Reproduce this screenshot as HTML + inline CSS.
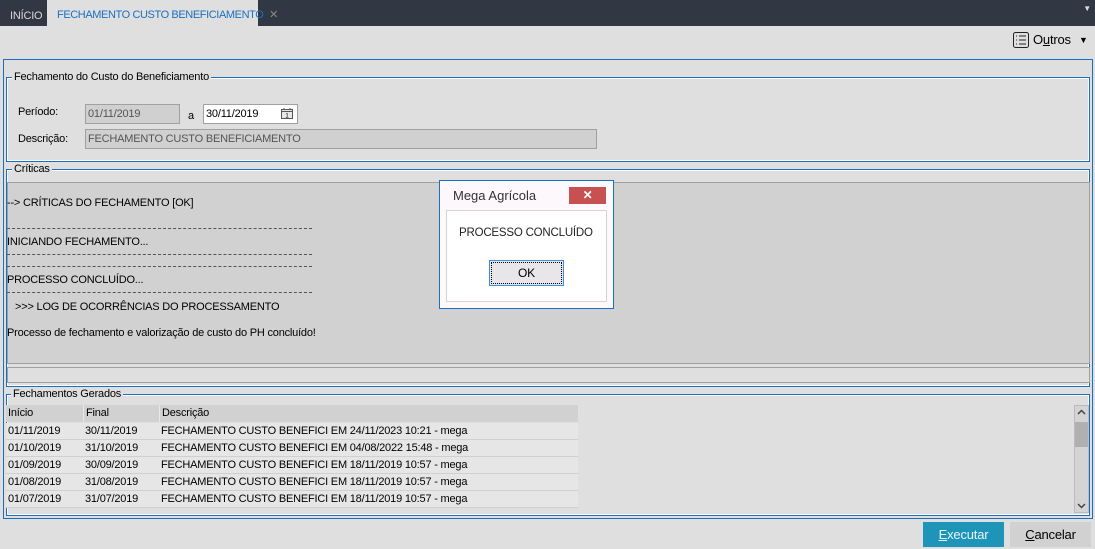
<!DOCTYPE html>
<html><head><meta charset="utf-8"><style>
*{box-sizing:border-box;margin:0;padding:0}
body{width:1095px;height:549px;background:#dfdfdf;font-family:"Liberation Sans",sans-serif;font-size:11px;letter-spacing:-0.2px;color:#000;position:relative;overflow:hidden;white-space:nowrap}
.a{position:absolute}
.top{left:0;top:0;width:1095px;height:26px;background:#323843}
.tab1{left:0;top:0;width:47px;height:26px;color:#d8d8d8;line-height:32px;padding-left:10px;font-size:11px}
.tab2{left:47px;top:0;width:211px;height:26px;background:#dfdfdf;color:#1b6fc2;line-height:30px;padding-left:10px;font-size:11px;letter-spacing:-0.4px}
.grp{border:1px solid #1b6fc2;box-shadow:inset 0 0 0 1px #fff}
.lg{background:#dfdfdf;padding:0 2px;color:#000}
.inp{height:20px;border:1px solid #a0a0a0;background:#d0d0d0;color:#555;line-height:18px;padding-left:2px}
.row{left:6px;width:572px;height:17px;border-bottom:1px solid #d0d0d0;background:#e6e6e6;line-height:17px}
.row span{position:absolute;top:0}
.dash{left:7px;width:305px;border-top:1px dashed #555;height:0}
</style></head><body>
<div class="a top"></div>
<div class="a tab1">INÍCIO</div>
<div class="a tab2">FECHAMENTO CUSTO BENEFICIAMENTO <span style="color:#888;margin-left:3px">✕</span></div>
<div class="a" style="right:4px;top:4px;color:#ddd;font-size:8px">▼</div>
<svg class="a" style="left:1013px;top:32px" width="16" height="16"><rect x="0.5" y="0.5" width="15" height="15" rx="2" fill="none" stroke="#222"/><path d="M3 4h1M3 8h1M3 12h1M6 4h7M6 8h7M6 12h7" stroke="#222"/></svg>
<div class="a" style="left:1033px;top:32px;font-size:13px">O<u>u</u>tros</div>
<div class="a" style="left:1079px;top:35px;font-size:9px">▼</div>
<div class="a" style="left:3px;top:59px;width:1090px;height:460px;border:1px solid #1b6fc2"></div>
<div class="a grp" style="left:6px;top:77px;width:1084px;height:85px"></div>
<div class="a lg" style="left:12px;top:71px">Fechamento do Custo do Beneficiamento</div>
<div class="a" style="left:18px;top:106px">Período:</div>
<div class="a inp" style="left:85px;top:104px;width:95px">01/11/2019</div>
<div class="a" style="left:188px;top:110px">a</div>
<div class="a inp" style="left:203px;top:104px;width:95px;background:#fff;color:#000">30/11/2019</div>
<svg class="a" style="left:280px;top:107px" width="14" height="13"><rect x="1.5" y="2.5" width="11" height="9" fill="#e8e8e8" stroke="#555"/><path d="M1.5 4.5h11M4 1v2M10 1v2" stroke="#555"/><text x="7" y="10.5" font-size="6" text-anchor="middle" font-family="Liberation Sans">1</text></svg>
<div class="a" style="left:18px;top:133px">Descrição:</div>
<div class="a inp" style="left:85px;top:129px;width:512px">FECHAMENTO CUSTO BENEFICIAMENTO</div>
<div class="a grp" style="left:6px;top:169px;width:1084px;height:218px"></div>
<div class="a lg" style="left:12px;top:163px">Críticas</div>
<div class="a" style="left:7px;top:182px;width:1083px;height:182px;background:#d1d1d1;border:1px solid #a0a0a0"></div>
<div class="a" style="left:7px;top:197px">--&gt; CRÍTICAS DO FECHAMENTO [OK]</div>
<div class="a dash" style="top:228px"></div>
<div class="a" style="left:7px;top:236px">INICIANDO FECHAMENTO...</div>
<div class="a dash" style="top:254px"></div>
<div class="a dash" style="top:266px"></div>
<div class="a" style="left:7px;top:274px">PROCESSO CONCLUÍDO...</div>
<div class="a dash" style="top:292px"></div>
<div class="a" style="left:15px;top:301px">&gt;&gt;&gt; LOG DE OCORRÊNCIAS DO PROCESSAMENTO</div>
<div class="a" style="left:7px;top:327px">Processo de fechamento e valorização de custo do PH concluído!</div>
<div class="a" style="left:7px;top:367px;width:1083px;height:16px;background:#dfdfdf;border:1px solid #a0a0a0"></div>
<div class="a grp" style="left:6px;top:394px;width:1084px;height:122px"></div>
<div class="a lg" style="left:11px;top:388px">Fechamentos Gerados</div>
<div class="a row" style="top:405px;background:#d1d1d1;border:0"><span style="left:2px">Início</span><span style="left:77px;border-left:1px solid #e8e8e8;padding-left:2px">Final</span><span style="left:153px;border-left:1px solid #e8e8e8;padding-left:2px">Descrição</span></div>
<div class="a row" style="top:423px"><span style="left:2px">01/11/2019</span><span style="left:79px">30/11/2019</span><span style="left:155px">FECHAMENTO CUSTO BENEFICI EM 24/11/2023 10:21 - mega</span></div>
<div class="a row" style="top:440px"><span style="left:2px">01/10/2019</span><span style="left:79px">31/10/2019</span><span style="left:155px">FECHAMENTO CUSTO BENEFICI EM 04/08/2022 15:48 - mega</span></div>
<div class="a row" style="top:457px"><span style="left:2px">01/09/2019</span><span style="left:79px">30/09/2019</span><span style="left:155px">FECHAMENTO CUSTO BENEFICI EM 18/11/2019 10:57 - mega</span></div>
<div class="a row" style="top:474px"><span style="left:2px">01/08/2019</span><span style="left:79px">31/08/2019</span><span style="left:155px">FECHAMENTO CUSTO BENEFICI EM 18/11/2019 10:57 - mega</span></div>
<div class="a row" style="top:491px"><span style="left:2px">01/07/2019</span><span style="left:79px">31/07/2019</span><span style="left:155px">FECHAMENTO CUSTO BENEFICI EM 18/11/2019 10:57 - mega</span></div>
<div class="a" style="left:1074px;top:405px;width:15px;height:108px;background:#d4d4d4;border:1px solid #bbb"></div>
<div class="a" style="left:1075px;top:422px;width:13px;height:25px;background:#b0b0b0"></div>
<svg class="a" style="left:1077px;top:409px" width="9" height="6"><path d="M1 5L4.5 1.5L8 5" fill="none" stroke="#444" stroke-width="1.5"/></svg>
<svg class="a" style="left:1077px;top:503px" width="9" height="6"><path d="M1 1L4.5 4.5L8 1" fill="none" stroke="#444" stroke-width="1.5"/></svg>
<div class="a" style="left:923px;top:522px;width:81px;height:25px;background:#1e95b8;color:#e8f4f8;text-align:center;line-height:25px;font-size:13px"><u>E</u>xecutar</div>
<div class="a" style="left:1010px;top:522px;width:81px;height:25px;background:#d1d1d1;text-align:center;line-height:25px;font-size:13px"><u>C</u>ancelar</div>
<div class="a" style="left:439px;top:180px;width:175px;height:129px;background:#fdf8fc;border:1px solid #1b6fc2"></div>
<div class="a" style="left:453px;top:188px;font-size:13px;color:#333;letter-spacing:0">Mega Agrícola</div>
<div class="a" style="left:569px;top:187px;width:37px;height:17px;background:#c75050;color:#fff;text-align:center;line-height:17px;font-size:12px;font-weight:bold">✕</div>
<div class="a" style="left:446px;top:210px;width:161px;height:92px;background:#fff;border:1px solid #d4d4d4"></div>
<div class="a" style="left:459px;top:227px;font-size:11.5px;color:#222">PROCESSO CONCLUÍDO</div>
<div class="a" style="left:489px;top:260px;width:75px;height:26px;border:1px solid #3b8fe0;background:#e8e6e8;padding:1px"><div style="width:100%;height:100%;border:1px dotted #000;text-align:center;line-height:20px;font-size:12px">OK</div></div>
</body></html>
